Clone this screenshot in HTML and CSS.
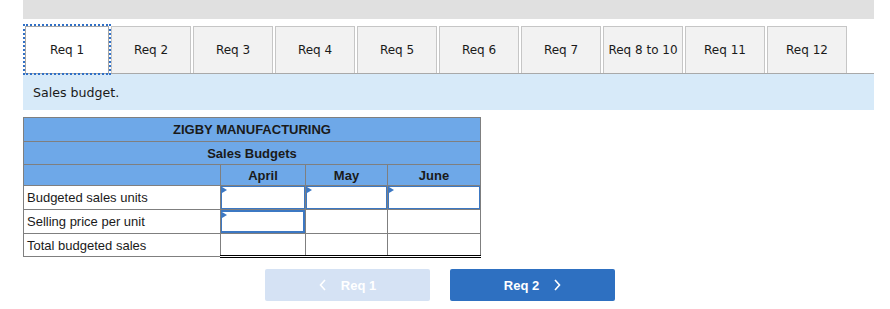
FILE: index.html
```html
<!DOCTYPE html>
<html>
  <head>
    <title>Sales budget</title>
    <meta name="viewport" content="width=device-width, initial-scale=1.0">
    <link rel="stylesheet" href="styles.css">
  </head>
  <body>
    <div class="page">
      <div class="topbar"></div>

      <div class="tabs">
        <button class="tab active">Req 1</button>
        <button class="tab">Req 2</button>
        <button class="tab">Req 3</button>
        <button class="tab">Req 4</button>
        <button class="tab">Req 5</button>
        <button class="tab">Req 6</button>
        <button class="tab">Req 7</button>
        <button class="tab">Req 8 to 10</button>
        <button class="tab">Req 11</button>
        <button class="tab">Req 12</button>
      </div>

      <div class="prompt">Sales budget.</div>

      <table class="budget">
        <colgroup>
          <col class="col-label">
          <col class="col-april">
          <col class="col-may">
          <col class="col-june">
        </colgroup>
        <tr class="head head-title">
          <th colspan="4">ZIGBY MANUFACTURING</th>
        </tr>
        <tr class="head head-sub">
          <th colspan="4">Sales Budgets</th>
        </tr>
        <tr class="head head-months">
          <th></th>
          <th>April</th>
          <th>May</th>
          <th>June</th>
        </tr>
        <tr>
          <td class="label">Budgeted sales units</td>
          <td class="entry"><div class="field"></div></td>
          <td class="entry"><div class="field"></div></td>
          <td class="entry"><div class="field"></div></td>
        </tr>
        <tr>
          <td class="label">Selling price per unit</td>
          <td class="entry"><div class="field focus"></div></td>
          <td class="value"></td>
          <td class="value"></td>
        </tr>
        <tr class="total">
          <td class="label">Total budgeted sales</td>
          <td class="value"></td>
          <td class="value"></td>
          <td class="value"></td>
        </tr>
      </table>

      <div class="nav">
        <button class="nav-btn prev" disabled>
          <svg width="8" height="12" viewBox="0 0 8 12"><polyline points="6,1 1.5,6 6,11" fill="none" stroke="#fff" stroke-width="1.6"/></svg>
          <span>Req 1</span>
        </button>
        <button class="nav-btn next">
          <span>Req 2</span>
          <svg width="8" height="12" viewBox="0 0 8 12"><polyline points="2,1 6.5,6 2,11" fill="none" stroke="#fff" stroke-width="1.6"/></svg>
        </button>
      </div>
    </div>
  </body>
</html>
```

FILE: styles.css
```css
body {
  margin: 0;
  background-color: #ffffff;
}
.page {
  width: 851px;
  margin-left: 23px;
}
.topbar {
  height: 19px;
  background-color: #e0e0e0;
}

/* tabs */
.tabs {
  display: flex;
  align-items: flex-end;
  gap: 2px;
  margin-top: 7px;
  padding-left: 2px;
}
.tab {
  width: 80px;
  height: 47px;
  padding: 0;
  font-family: "DejaVu Sans", Verdana, sans-serif;
  font-size: 12px;
  color: #1a1a1a;
  background-color: #f2f2f2;
  border: 1px solid #c6c6c6;
  border-bottom: none;
  cursor: pointer;
}
.tab.active {
  width: 84px;
  background-color: #ffffff;
  border-color: #a8a8a8;
  outline: 2px dotted #2f6fc6;
  outline-offset: 0;
}

.prompt {
  height: 36px;
  line-height: 37px;
  padding-left: 10px;
  font-family: "DejaVu Sans", Verdana, sans-serif;
  font-size: 12.6px;
  color: #1a1a1a;
  background-color: #d7eaf9;
  border-top: 1px solid #a9a9a9;
}

/* budget table */
.budget {
  margin-top: 7px;
  width: 457px;
  border-collapse: collapse;
  font-family: "Liberation Sans", Arial, sans-serif;
  font-size: 13px;
  color: #1a1a1a;
  table-layout: fixed;
}
.col-label { width: 197px; }
.col-april { width: 85px; }
.col-may { width: 82px; }
.col-june { width: 93px; }
.budget th,
.budget td {
  border: 1px solid #7f7f7f;
  padding: 0;
}
.head th {
  background-color: #6ea8e8;
  font-weight: bold;
  text-align: center;
}
.head-title th { height: 22px; padding-bottom: 1px; }
.head-sub th { height: 22px; }
.head-months th { height: 20px; }
.budget td {
  height: 23px;
}
.label {
  padding-left: 3px !important;
  background-color: #ffffff;
}
.entry {
  vertical-align: top;
}
.field {
  position: relative;
  height: 21px;
  border: 1px solid #3c78c3;
  background-color: #ffffff;
}
.field.focus {
  border-width: 2px 2px 2px 1px;
  height: 19px;
}
.field::before {
  content: "";
  position: absolute;
  left: 0;
  top: 0;
  border-top: 3px solid transparent;
  border-bottom: 3px solid transparent;
  border-left: 5px solid #3c78c3;
}
.total td {
  height: 21px;
}
.total .value {
  border-top: 1px solid #000000;
  border-bottom: 3px double #000000;
}

/* navigation */
.nav {
  display: flex;
  gap: 20px;
  margin-top: 11px;
  padding-left: 242px;
}
.nav-btn {
  display: flex;
  align-items: center;
  justify-content: center;
  gap: 14px;
  width: 165px;
  height: 32px;
  font-family: "Liberation Sans", Arial, sans-serif;
  font-size: 13px;
  font-weight: bold;
  color: #ffffff;
  border: none;
  border-radius: 2px;
  cursor: pointer;
}
.prev {
  background-color: #d5e2f4;
  cursor: default;
}
.next {
  background-color: #2e70c1;
}
```
